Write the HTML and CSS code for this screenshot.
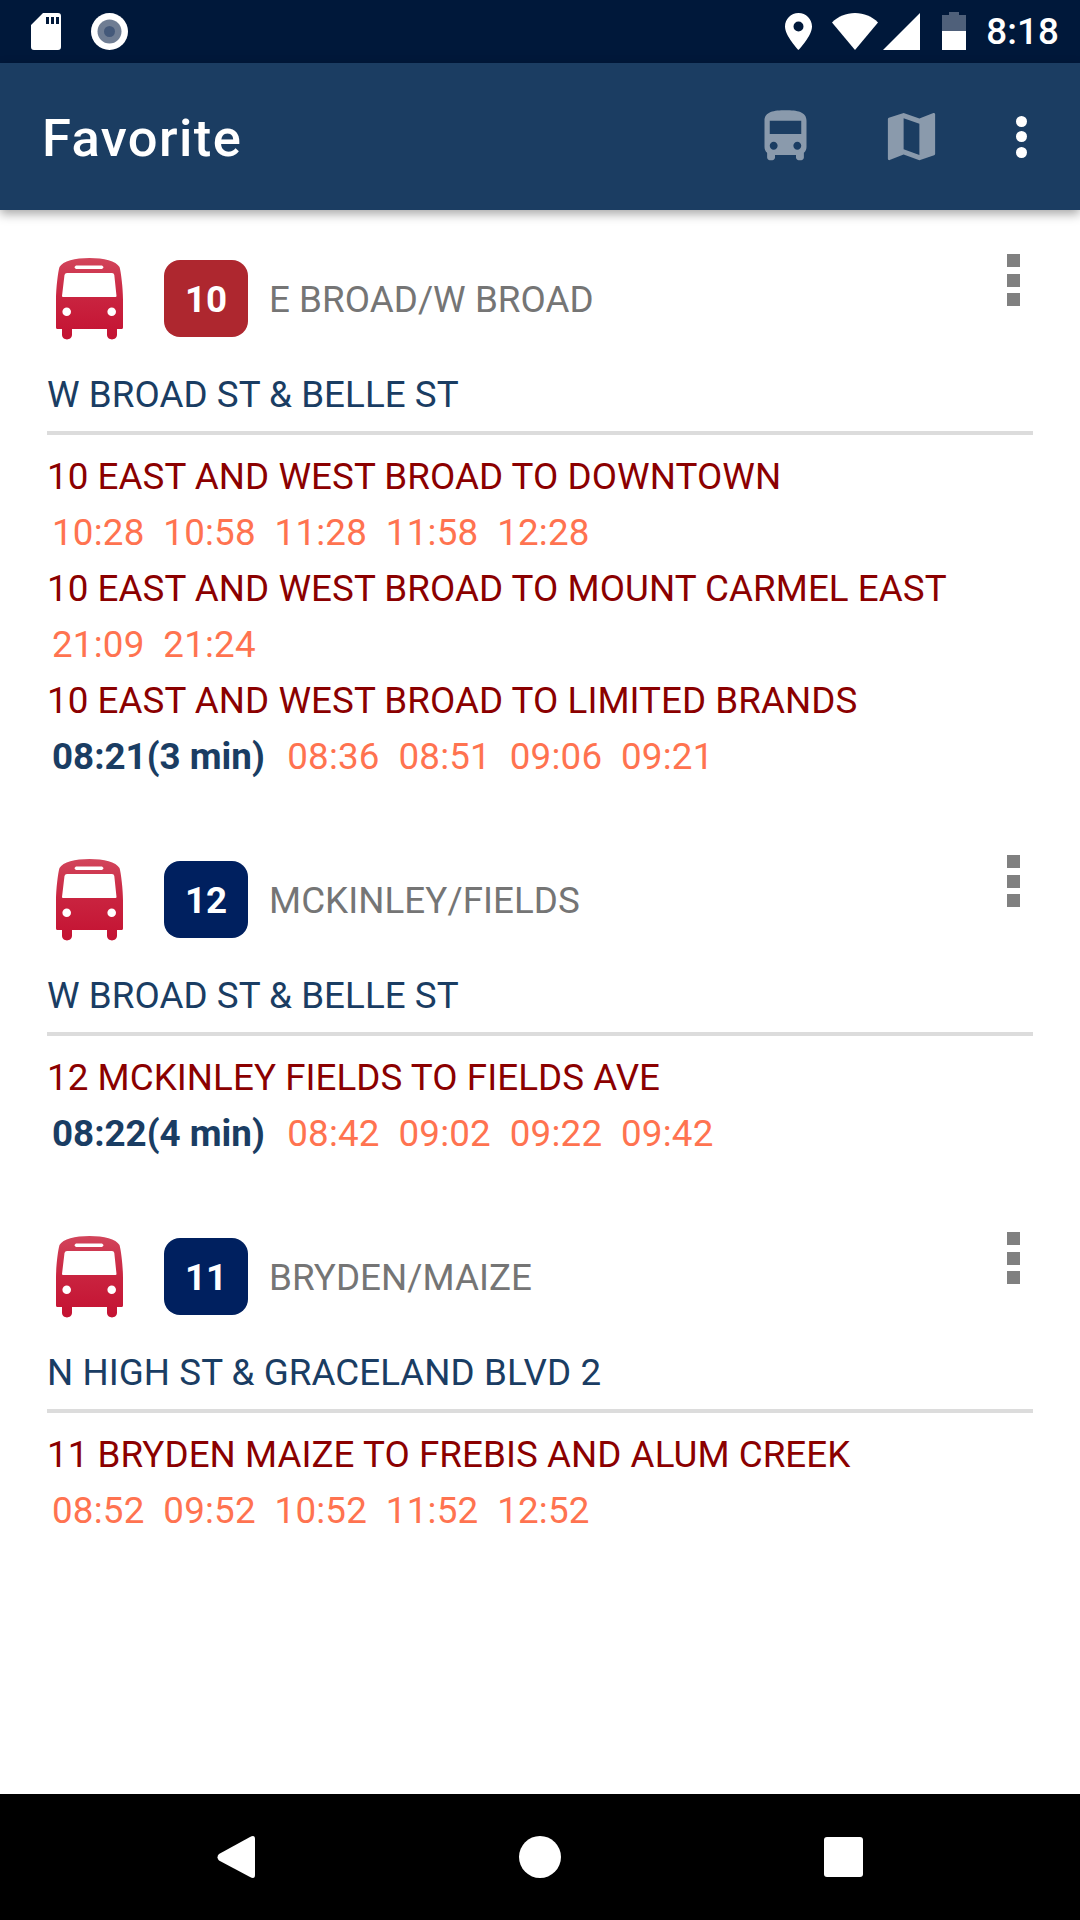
FILE: index.html
```html
<!DOCTYPE html>
<html lang="en">
<head>
<meta charset="utf-8">
<title>Favorite</title>
<link rel="stylesheet" href="styles.css">
</head>
<body>
<svg class="defs" width="0" height="0" aria-hidden="true">
  <defs>
    <linearGradient id="busRed" x1="0" y1="0" x2="0" y2="1">
      <stop offset="0" stop-color="#d2455b"/>
      <stop offset="0.5" stop-color="#c9233f"/>
      <stop offset="1" stop-color="#c41232"/>
    </linearGradient>
    <symbol id="bus" viewBox="0 0 67 82">
      <path fill="url(#busRed)" fill-rule="evenodd" d="M33.500 0C19 0 7 3 3.500 9C2 14 0 30 0 42V69.500Q0 71 1.500 71H6V76.500C6 83 16 83 16 76.500V71H51V76.500C51 83 61 83 61 76.500V71H65.500Q67 71 67 69.500V42C67 30 65 14 63.500 9C60 3 48 0 33.500 0ZM20 7.500H46Q49 9.300 46 11H20Q17 9.300 20 7.500ZM11 15H56Q58 15 58.300 17L60.500 38Q60.500 39 59.500 39H7Q6 39 6 38L8.500 17Q9 15 11 15ZM10.700 49.500A4.300 4.300 0 1 1 10.700 58.100A4.300 4.300 0 1 1 10.700 49.500ZM55.700 49.500A4.300 4.300 0 1 1 55.700 58.100A4.300 4.300 0 1 1 55.700 49.500Z"/>
    </symbol>
  </defs>
</svg>
<div class="screen">
  <div class="status">
    <svg class="st-sd" viewBox="0 0 30 37"><path fill="#fff" fill-rule="evenodd" d="M12 0H27Q30 0 30 3V34Q30 37 27 37H3Q0 37 0 34V12ZM15 4V11H18V4ZM20 4V11H23V4ZM25 4V11H28V4Z"/></svg>
    <svg class="st-cam" viewBox="0 0 37 37"><circle cx="18.500" cy="18.500" r="18.500" fill="#fff"/><circle cx="18.500" cy="18.500" r="12" fill="#6f7d93"/><circle cx="18.500" cy="18.500" r="5.500" fill="#44597a"/></svg>
    <span class="st-space"></span>
    <svg class="st-pin" viewBox="0 0 27 37"><path fill="#fff" fill-rule="evenodd" d="M13.500 0C6 0 0 6 0 13.500C0 23 13.500 37 13.500 37S27 23 27 13.500C27 6 21 0 13.500 0ZM13.500 8.500A5 5 0 1 1 13.500 18.500A5 5 0 1 1 13.500 8.500Z"/></svg>
    <svg class="st-wifi" viewBox="0 0 46 37"><path fill="#fff" d="M23 37L0 9.500C6 3.500 14 0 23 0S40 3.500 46 9.500Z"/></svg>
    <svg class="st-signal" viewBox="0 0 37 37"><path fill="#fff" d="M0 37L37 0V37Z"/></svg>
    <svg class="st-batt" viewBox="0 0 24 38"><path fill="#4f607a" d="M7 0H17V3H24V19H0V3H7Z"/><path fill="#fff" d="M0 19H24V38H0Z"/></svg>
    <span class="st-time">8:18</span>
  </div>
  <header class="appbar">
    <h1 class="title">Favorite</h1>
    <svg class="bar-icon" viewBox="0 0 24 24"><path d="M4 16c0 .88.39 1.670 1 2.220V20c0 .55.45 1 1 1h1c.55 0 1-.45 1-1v-1h8v1c0 .55.45 1 1 1h1c.55 0 1-.45 1-1v-1.780c.61-.55 1-1.340 1-2.220V6c0-3.500-3.580-4-8-4s-8 .5-8 4v10zm3.500 1c-.83 0-1.500-.67-1.500-1.500S6.670 14 7.500 14s1.500.67 1.500 1.500S8.330 17 7.500 17zm9 0c-.83 0-1.500-.67-1.500-1.500s.67-1.500 1.500-1.500 1.500.67 1.500 1.500-.67 1.500-1.500 1.500zm1.500-6H6V6h12v5z"/></svg>
    <svg class="bar-icon map" viewBox="0 0 24 24"><path d="M20.500 3l-.16.03L15 5.100 9 3 3.360 4.900c-.21.07-.36.25-.36.48V20.500c0 .28.22.5.5.5l.16-.03L9 18.900l6 2.100 5.640-1.900c.21-.07.36-.25.36-.48V3.500c0-.28-.22-.5-.5-.5zM15 19l-6-2.110V5l6 2.110V19z"/></svg>
    <div class="bar-more"><i></i><i></i><i></i></div>
  </header>
  <main class="list">
    <section class="card">
      <div class="card-head">
        <svg class="bus"><use href="#bus"/></svg>
        <span class="badge red">10</span>
        <span class="route-name">E BROAD/W BROAD</span>
        <div class="more"><i></i><i></i><i></i></div>
      </div>
      <div class="stop">W BROAD ST &amp; BELLE ST</div>
      <div class="dest">10 EAST AND WEST BROAD TO DOWNTOWN</div>
      <div class="times"><span>10:28</span><span>10:58</span><span>11:28</span><span>11:58</span><span>12:28</span></div>
      <div class="dest">10 EAST AND WEST BROAD TO MOUNT CARMEL EAST</div>
      <div class="times"><span>21:09</span><span>21:24</span></div>
      <div class="dest">10 EAST AND WEST BROAD TO LIMITED BRANDS</div>
      <div class="times"><b>08:21(3 min)</b><span>08:36</span><span>08:51</span><span>09:06</span><span>09:21</span></div>
    </section>
    <section class="card">
      <div class="card-head">
        <svg class="bus"><use href="#bus"/></svg>
        <span class="badge navy">12</span>
        <span class="route-name">MCKINLEY/FIELDS</span>
        <div class="more"><i></i><i></i><i></i></div>
      </div>
      <div class="stop">W BROAD ST &amp; BELLE ST</div>
      <div class="dest">12 MCKINLEY FIELDS TO FIELDS AVE</div>
      <div class="times"><b>08:22(4 min)</b><span>08:42</span><span>09:02</span><span>09:22</span><span>09:42</span></div>
    </section>
    <section class="card">
      <div class="card-head">
        <svg class="bus"><use href="#bus"/></svg>
        <span class="badge navy">11</span>
        <span class="route-name">BRYDEN/MAIZE</span>
        <div class="more"><i></i><i></i><i></i></div>
      </div>
      <div class="stop">N HIGH ST &amp; GRACELAND BLVD 2</div>
      <div class="dest">11 BRYDEN MAIZE TO FREBIS AND ALUM CREEK</div>
      <div class="times"><span>08:52</span><span>09:52</span><span>10:52</span><span>11:52</span><span>12:52</span></div>
    </section>
  </main>
  <nav class="navbar">
    <svg class="nav-back" viewBox="0 0 38 42"><path fill="#fff" d="M2 24.500Q-1 21 2 18L33 1Q38 -1.500 38 3V39Q38 43.500 33 41Z"/></svg>
    <span class="nav-home"></span>
    <span class="nav-recent"></span>
  </nav>
</div>
</body>
</html>
```
FILE: styles.css
```css
* { box-sizing: border-box; }
html, body { margin: 0; padding: 0; background: #fff; }
.defs { position: absolute; }
.screen {
  width: 1080px; height: 1920px;
  display: flex; flex-direction: column;
  font-family: Roboto, "Liberation Sans", sans-serif;
  overflow: hidden;
}
.status {
  height: 63px; flex: none;
  background: #00183a;
  display: flex; align-items: flex-start;
  padding: 13px 21px 0 31px;
  color: #fff;
}
.status svg { display: block; flex: none; }
.st-sd { width: 30px; height: 37px; }
.st-cam { width: 37px; height: 37px; margin-left: 30px; }
.st-space { flex: 1; }
.st-pin { width: 27px; height: 37px; }
.st-wifi { width: 46px; height: 37px; margin-left: 20px; }
.st-signal { width: 37px; height: 37px; margin-left: 5px; }
.st-batt { width: 24px; height: 38px; margin-left: 22px; margin-top: -1px; }
.st-time { font-size: 36.750px; font-weight: 500; line-height: 37px; margin-left: 20px; letter-spacing: .1px; }
.appbar {
  height: 147px; flex: none;
  background: #1b3d62;
  display: flex; align-items: center;
  padding: 0 0 0 42px;
  box-shadow: 0 4px 10px rgba(0,0,0,.35);
  position: relative;
}
.title {
  margin: 2px 0 0; flex: 1;
  color: #fff; font-size: 52.500px; font-weight: 500;
  letter-spacing: 1.400px;
}
.bar-icon { width: 63px; height: 63px; fill: #8a9aac; display: block; flex: none; margin-right: 63px; }
.bar-icon.map { margin-right: 73px; }
.bar-more { width: 11px; margin-right: 53px; display: flex; flex-direction: column; gap: 4.500px; flex: none; }
.bar-more i { display: block; width: 11px; height: 11px; border-radius: 50%; background: #fff; }
.list { flex: 1; }
.card { padding: 48px 47px 27px 47px; }
.card-head { display: flex; align-items: flex-start; height: 82px; margin-bottom: 26px; }
.bus { width: 67px; height: 82px; margin-left: 9px; flex: none; }
.badge {
  width: 84px; height: 77px; margin: 2px 21px 0 41px;
  border-radius: 16px;
  color: #fff; font-size: 36.750px; font-weight: 700;
  padding-top: 2px;
  display: flex; align-items: center; justify-content: center;
  flex: none;
}
.red { background: #ae272f; }
.navy { background: #00205f; }
.route-name { color: #757575; font-size: 36.750px; line-height: 84px; letter-spacing: .05px; flex: 1; }
.more { width: 13px; margin: -4px 13px 0 0; display: flex; flex-direction: column; gap: 6.500px; flex: none; }
.more i { display: block; width: 13px; height: 13px; background: #808080; }
.stop {
  height: 69px; line-height: 58px;
  color: #1a3d63; font-size: 36.750px;
  letter-spacing: .05px;
  border-bottom: 4px solid #dcdcdc;
  padding-bottom: 9px;
  margin-bottom: 13px;
}
.dest, .times { height: 56px; line-height: 58px; font-size: 36.750px; white-space: nowrap; }
.dest { color: #8b0000; letter-spacing: .05px; }
.times { color: #ff7350; padding-left: 5px; display: flex; gap: 18.750px; letter-spacing: .2px; }
.times b { color: #1a3d63; font-weight: 700; margin-right: 3.600px; letter-spacing: 0; }
.navbar {
  height: 126px; flex: none;
  background: #000;
  position: relative;
  display: flex; align-items: center;
}
.nav-back { width: 38px; height: 42px; margin-left: 217px; display: block; }
.nav-home { width: 42px; height: 42px; border-radius: 50%; background: #fff; margin-left: 264px; }
.nav-recent { width: 39px; height: 40px; border-radius: 3px; background: #fff; margin-left: 263px; }
```
